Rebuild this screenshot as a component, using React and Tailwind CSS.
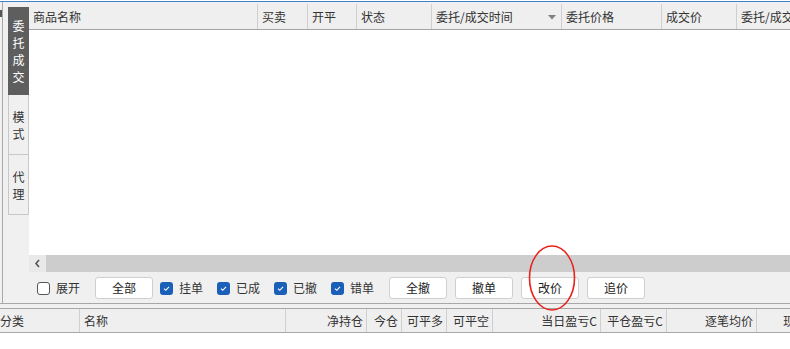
import React from 'react';

const topCols = [
  { label: '商品名称', w: 229 },
  { label: '买卖', w: 50 },
  { label: '开平', w: 49 },
  { label: '状态', w: 75 },
  { label: '委托/成交时间', w: 130, sort: true },
  { label: '委托价格', w: 100 },
  { label: '成交价', w: 75 },
  { label: '委托/成交时间', w: 80 },
];

const bottomCols = [
  { label: '分类', w: 80, align: 'left', pl: 'pl-0' },
  { label: '名称', w: 206, align: 'left' },
  { label: '净持仓', w: 81, align: 'right' },
  { label: '今仓', w: 35, align: 'right' },
  { label: '可平多', w: 45, align: 'right' },
  { label: '可平空', w: 46, align: 'right' },
  { label: '当日盈亏C', w: 108, align: 'right' },
  { label: '平仓盈亏C', w: 66, align: 'right' },
  { label: '逐笔均价', w: 90, align: 'right' },
  { label: '现价', w: 40, align: 'left' },
];

const Check = ({ checked, label }) => (
  <label className="flex items-center gap-[6px]">
    {checked ? (
      <span className="w-[13px] h-[13px] rounded-[3px] bg-[#1a60b8] flex items-center justify-center">
        <svg width="9" height="9" viewBox="0 0 9 9">
          <path d="M2 4.6 L3.8 6.3 L7 2.8" stroke="#fff" strokeWidth="1.1" fill="none" />
        </svg>
      </span>
    ) : (
      <span className="w-[13px] h-[13px] rounded-[3px] border border-[#555] bg-white" />
    )}
    <span>{label}</span>
  </label>
);

const Btn = ({ children }) => (
  <button className="w-[58px] h-[22px] bg-white border border-[#cfcfcf] rounded-[3px] text-[12px] text-[#222] flex items-center justify-center">
    {children}
  </button>
);

const Tab = ({ chars, active, h }) => (
  <div
    className={`w-[21px] flex flex-col items-center justify-center leading-[17px] border ${
      active ? 'bg-[#5e5e5e] text-white border-[#5e5e5e]' : 'bg-[#f0f0f0] text-[#333] border-[#c8c8c8] border-t-0'
    } ${h}`}
  >
    {chars.split('').map((c, i) => (
      <span key={i}>{c}</span>
    ))}
  </div>
);

export default function App() {
  return (
    <div
      className="relative w-[790px] h-[349px] overflow-hidden bg-[#f0f0f0] flex flex-col text-[12px] text-[#333]"
      style={{ fontFamily: '"Noto Sans CJK SC", "Noto Sans", sans-serif' }}
    >
      <div className="h-[1px] bg-white" />
      <div className="h-[1px] bg-[#3f7fc6]" />

      {/* upper panel */}
      <div className="h-[301px] flex">
        <div className="w-[3px] border-r border-[#a8a8a8] bg-[#f0f0f0] relative">
          <div className="absolute left-0 top-[8px] w-[2px] h-[7px] bg-[#555]" />
        </div>
        <div className="w-[26px] pl-[5px] pt-[5px] flex flex-col">
          <Tab chars="委托成交" active h="h-[88px]" />
          <Tab chars="模式" h="h-[60px]" />
          <Tab chars="代理" h="h-[60px]" />
        </div>
        <div className="flex-1 flex flex-col pt-[2px] min-w-0">
          {/* header */}
          <div className="h-[26px] flex bg-[#efefef] border-b border-[#a4a4a4]">
            {topCols.map((c, i) => (
              <div
                key={i}
                style={{ width: c.w }}
                className={`shrink-0 flex items-center pl-[4px] whitespace-nowrap overflow-hidden relative ${
                  i < topCols.length - 1 ? 'border-r border-[#cfcfcf]' : ''
                }`}
              >
                {c.label}
                {c.sort && (
                  <svg className="absolute right-[5px] top-[11px]" width="8" height="5" viewBox="0 0 8 5">
                    <path d="M0 0 H8 L4 4.5 Z" fill="#808080" />
                  </svg>
                )}
              </div>
            ))}
          </div>
          {/* body */}
          <div className="h-[225px] bg-white" />
          {/* scrollbar */}
          <div className="h-[17px] flex">
            <div className="w-[17px] bg-[#e9e9e9] flex items-center justify-center">
              <svg width="7" height="9" viewBox="0 0 7 9">
                <path d="M5 1 L2 4.5 L5 8" stroke="#555" strokeWidth="1.6" fill="none" />
              </svg>
            </div>
            <div className="flex-1 bg-[#cdcdcd]" />
          </div>
          {/* toolbar */}
          <div className="h-[31px] flex items-center pl-[8px] pt-[1px]">
            <Check label="展开" />
            <div className="ml-[15px]">
              <Btn>全部</Btn>
            </div>
            <div className="ml-[7px] flex gap-[14px]">
              <Check checked label="挂单" />
              <Check checked label="已成" />
              <Check checked label="已撤" />
              <Check checked label="错单" />
            </div>
            <div className="ml-[15px] flex gap-[8px]">
              <Btn>全撤</Btn>
              <Btn>撤单</Btn>
              <Btn>改价</Btn>
              <Btn>追价</Btn>
            </div>
          </div>
        </div>
      </div>

      {/* divider */}
      <div className="h-[1px] bg-[#a8a8a8]" />
      <div className="h-[4px]" />

      {/* bottom header */}
      <div className="h-[25px] flex bg-[#efefef] border-y border-[#a8a8a8]">
        {bottomCols.map((c, i) => (
          <div
            key={i}
            style={{ width: c.w }}
            className={`shrink-0 flex items-center whitespace-nowrap overflow-hidden ${
              c.align === 'right' ? 'justify-end pr-[3px]' : c.pl || 'pl-[4px]'
            } ${i < bottomCols.length - 1 ? 'border-r border-[#cfcfcf]' : ''} ${i === 9 ? 'pl-[26px]' : ''}`}
          >
            {c.label}
          </div>
        ))}
      </div>
      <div className="flex-1 bg-white" />

      {/* annotation */}
      <svg className="absolute left-[527px] top-[244px] pointer-events-none" width="50" height="68" viewBox="0 0 50 68">
        <ellipse cx="25" cy="34" rx="22.5" ry="32" stroke="#e8231c" strokeWidth="1.6" fill="none" />
      </svg>
    </div>
  );
}
